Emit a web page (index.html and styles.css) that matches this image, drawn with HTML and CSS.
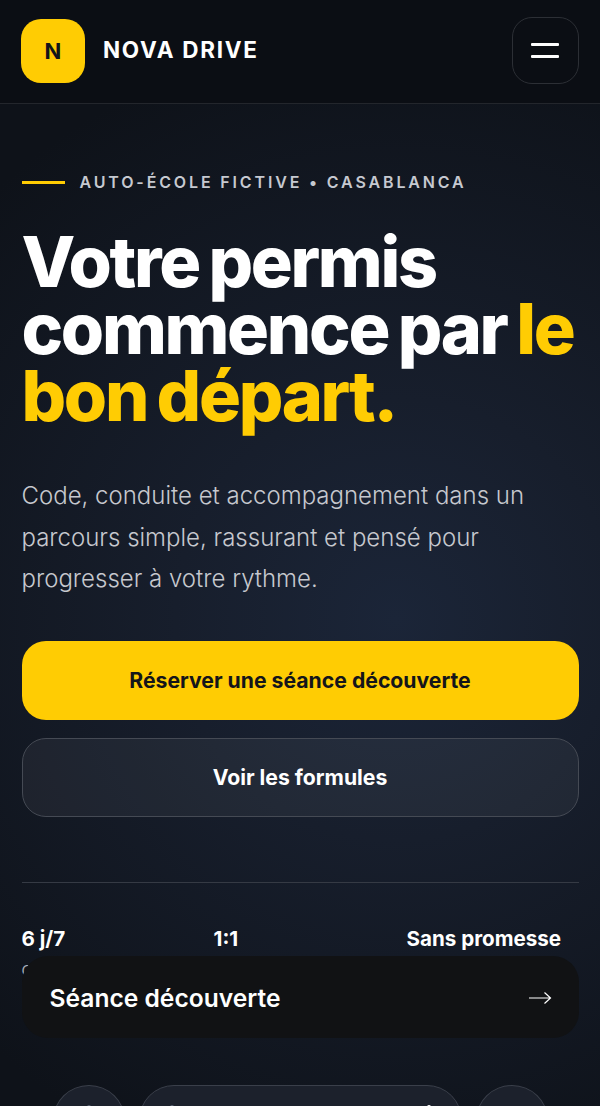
FILE: index.html
```html
<!DOCTYPE html>
<html lang="fr">

<head>
    <meta charset="UTF-8">
    <meta name="viewport" content="width=device-width, initial-scale=1.0">
    <title>Nova Drive</title>
    <link rel="stylesheet" href="styles.css">
</head>

<body>
    <header class="topbar">
        <div class="brand">
            <span class="brand-mark">N</span>
            <span class="brand-name">NOVA DRIVE</span>
        </div>
        <button class="menu-btn" aria-label="Menu">
            <span></span>
            <span></span>
        </button>
    </header>

    <main class="hero">
        <p class="eyebrow"><span class="eyebrow-line"></span>AUTO-ÉCOLE FICTIVE • CASABLANCA</p>
        <h1>Votre permis commence par <em>le bon départ.</em></h1>
        <p class="lead">Code, conduite et accompagnement dans un parcours simple, rassurant et pensé pour progresser à votre rythme.</p>

        <div class="actions">
            <a class="btn btn-primary" href="#">Réserver une séance découverte</a>
            <a class="btn btn-ghost" href="#">Voir les formules</a>
        </div>

        <ul class="stats">
            <li><strong>6 j/7</strong><span>Cours</span></li>
            <li><strong>1:1</strong><span>Suivi</span></li>
            <li><strong>Sans promesse</strong><span>Irréaliste</span></li>
        </ul>
    </main>

    <a class="sticky-cta" href="#">
        <span>Séance découverte</span>
        <svg width="24" height="14" viewBox="0 0 24 14" fill="none" stroke="currentColor" stroke-width="1.2">
            <path d="M1 7H22.5M16.5 1.5L22.5 7L16.5 12.5" />
        </svg>
    </a>

    <nav class="browser-bar">
        <span class="round-btn"><i class="dot dot-dim"></i></span>
        <span class="url-pill"><i class="dot dot-dim"></i><i class="dot"></i></span>
        <span class="round-btn"></span>
    </nav>
</body>

</html>
```

FILE: styles.css
```css
* {
    box-sizing: border-box;
}

body {
    margin: 0;
    height: 1106px;
    overflow: hidden;
    position: relative;
    font-family: Inter, "Liberation Sans", sans-serif;
    color: #fff;
    background: radial-gradient(circle at 66% 56%, #1b2538 0, #171e2c 30%, #0e1219 80%), #0b0e14;
}

.topbar {
    height: 104px;
    padding: 18px 21.5px 20px 21px;
    display: flex;
    align-items: center;
    justify-content: space-between;
    background: #0b0e14;
    border-bottom: 1px solid #23262c;
}

.brand {
    display: flex;
    align-items: center;
    gap: 18px;
}

.brand-mark {
    width: 64px;
    height: 64px;
    display: flex;
    align-items: center;
    justify-content: center;
    background: #ffcc03;
    color: #12141a;
    border-radius: 20px;
    font-size: 22px;
    font-weight: 700;
}

.brand-name {
    font-size: 22.5px;
    font-weight: 700;
    letter-spacing: 1.7px;
    margin-top: -3px;
}

.menu-btn {
    width: 67px;
    height: 67px;
    padding: 0;
    background: transparent;
    border: 1.5px solid #2c2f35;
    border-radius: 20px;
    display: flex;
    flex-direction: column;
    align-items: center;
    justify-content: center;
    gap: 9px;
}

.menu-btn span {
    width: 28px;
    height: 3px;
    background: #fff;
    border-radius: 1px;
}

.hero {
    padding: 0 21.5px;
}

.eyebrow {
    margin: 68px 0 0;
    height: 20px;
    display: flex;
    align-items: center;
    gap: 15px;
    font-size: 16px;
    font-weight: 600;
    letter-spacing: 2.85px;
    color: #c6c9d0;
    white-space: nowrap;
}

.eyebrow-line {
    width: 43px;
    height: 3px;
    background: #ffcc03;
}

h1 {
    margin: 36px 0 0;
    font-size: 70px;
    line-height: 67px;
    font-weight: 800;
    letter-spacing: -2.3px;
    word-spacing: -3.5px;
}

h1 em {
    font-style: normal;
    color: #ffcc03;
}

.lead {
    margin: 46px 0 0;
    font-size: 24px;
    line-height: 41.5px;
    font-weight: 300;
    color: #c6c8ce;
}

.actions {
    margin-top: 41px;
    display: flex;
    flex-direction: column;
    gap: 18px;
}

.btn {
    height: 79px;
    border-radius: 24px;
    display: flex;
    align-items: center;
    justify-content: center;
    font-size: 21.2px;
    font-weight: 700;
    text-decoration: none;
}

.btn-primary {
    background: #ffcc03;
    color: #14151a;
}

.btn-ghost {
    background: rgba(255, 255, 255, 0.05);
    border: 1.5px solid #454a54;
    color: #fff;
}

.stats {
    list-style: none;
    margin: 65px 0 0;
    padding: 38px 0 0;
    border-top: 1px solid #353a44;
    display: grid;
    grid-template-columns: 192px 193px 1fr;
}

.stats li {
    display: flex;
    flex-direction: column;
    gap: 4px;
}

.stats strong {
    font-size: 20.6px;
    line-height: 36px;
    font-weight: 700;
}

.stats span {
    font-size: 15px;
    color: #a9adb6;
}

.sticky-cta {
    position: absolute;
    left: 21.5px;
    right: 21.5px;
    top: 956px;
    height: 82px;
    padding: 2px 27px 0 28px;
    display: flex;
    align-items: center;
    justify-content: space-between;
    background: #111214;
    border-radius: 26px;
    color: #fff;
    font-size: 24.6px;
    font-weight: 600;
    text-decoration: none;
}

.browser-bar {
    position: absolute;
    left: 53px;
    right: 52px;
    top: 1085px;
    height: 70px;
    display: flex;
    gap: 14px;
}

.round-btn {
    width: 72px;
    height: 70px;
    border-radius: 50%;
    background: #1c212c;
    border: 1px solid #3a3f4a;
    display: flex;
    justify-content: center;
    padding-top: 19px;
}

.url-pill {
    flex: 1;
    border-radius: 36px;
    background: #1c212c;
    border: 1px solid #3a3f4a;
    display: flex;
    justify-content: space-between;
    padding: 19px 30px 0;
}

.dot {
    width: 4px;
    height: 4px;
    border-radius: 50%;
    background: #fff;
}

.dot-dim {
    background: #596070;
}
```
